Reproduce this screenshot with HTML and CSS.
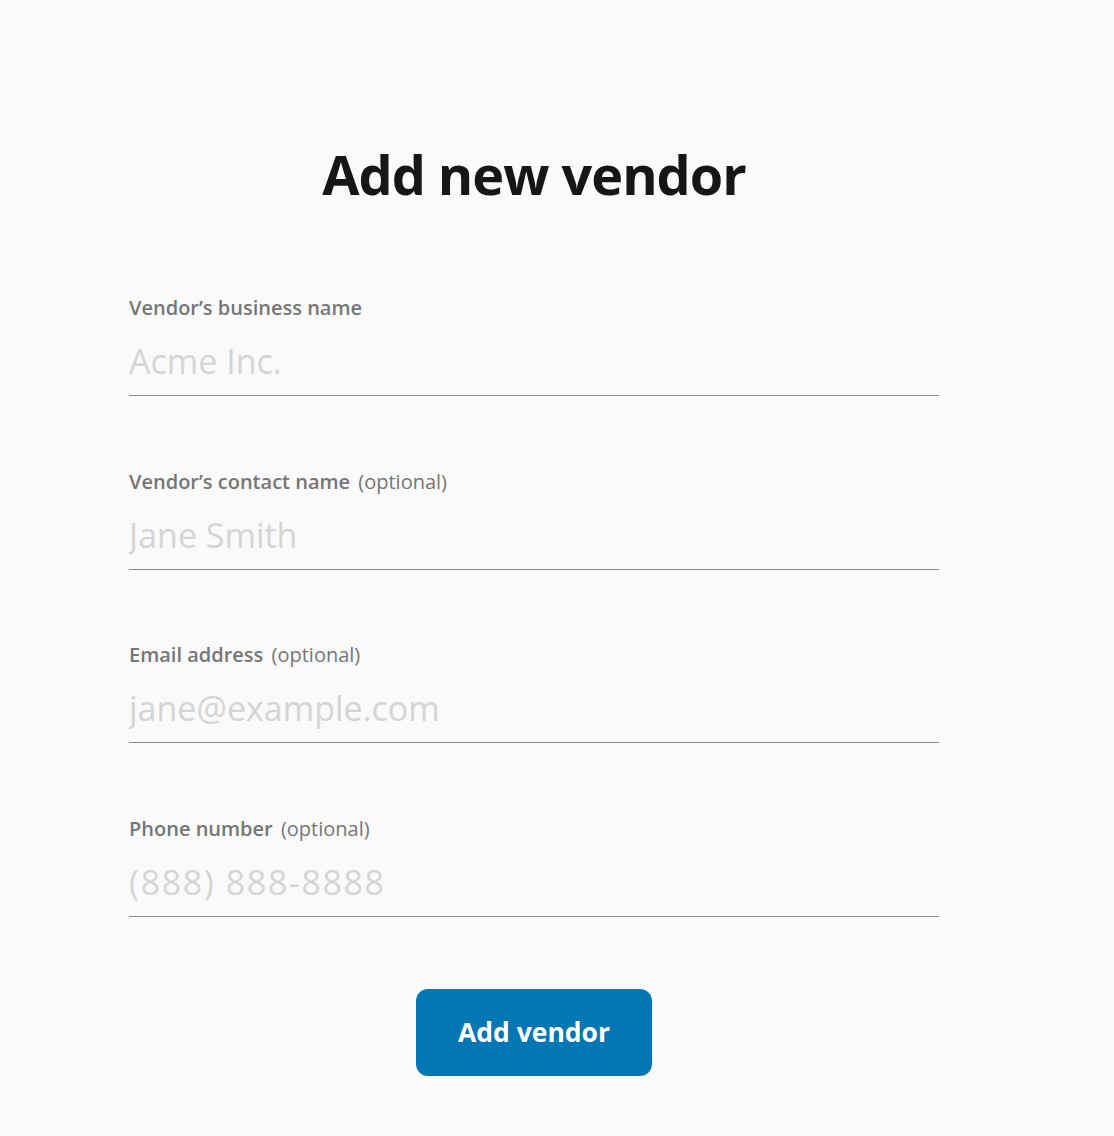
FILE: index.html
```html
<!DOCTYPE html>
<html lang="en">
<head>
<meta charset="utf-8">
<title>Add new vendor</title>
<link rel="stylesheet" href="styles.css">
</head>
<body>
<main class="page">
  <h1 class="title">Add new vendor</h1>
  <form class="form">
    <label class="field">
      <span class="label"><span class="label-main">Vendor’s business name</span></span>
      <input class="input" type="text" placeholder="Acme Inc.">
    </label>
    <label class="field">
      <span class="label"><span class="label-main">Vendor’s contact name</span> <span class="label-opt">(optional)</span></span>
      <input class="input" type="text" placeholder="Jane Smith">
    </label>
    <label class="field">
      <span class="label"><span class="label-main">Email address</span> <span class="label-opt">(optional)</span></span>
      <input class="input" type="email" placeholder="jane@example.com">
    </label>
    <label class="field">
      <span class="label"><span class="label-main">Phone number</span> <span class="label-opt">(optional)</span></span>
      <input class="input input-phone" type="tel" placeholder="(888) 888-8888">
    </label>
    <div class="actions">
      <button class="button" type="button">Add vendor</button>
    </div>
  </form>
</main>
</body>
</html>
```
FILE: styles.css
```css
html, body {
  margin: 0;
  padding: 0;
  background: #fafafa;
}
body {
  font-family: "Open Sans", "Noto Sans", sans-serif;
  color: #1a1a1a;
}
.page {
  width: 810px;
  margin-left: 129px;
  padding-top: 134px;
  display: flex;
  flex-direction: column;
}
.title {
  margin: 0;
  text-align: center;
  font-size: 54px;
  font-weight: 700;
  line-height: 80px;
  color: #161616;
  letter-spacing: -1px;
}
.form {
  margin-top: 80px;
  display: flex;
  flex-direction: column;
}
.field {
  display: flex;
  flex-direction: column;
  margin-bottom: 71.7px;
}
.label {
  font-size: 20px;
  line-height: 28px;
  height: 28px;
  color: #767676;
}
.label-main {
  font-weight: 600;
}
.label-opt {
  font-weight: 400;
  margin-left: 3px;
}
.input {
  box-sizing: border-box;
  margin: 11px 0 0 0;
  height: 63px;
  border: none;
  border-bottom: 1px solid #8a8a8a;
  border-radius: 0;
  background: transparent;
  padding: 0 0 6px 0;
  font-family: inherit;
  font-size: 34px;
  color: #333;
  outline: none;
}
.input::placeholder {
  color: #d5d5d5;
  opacity: 1;
}
.input-phone {
  letter-spacing: 1.6px;
}
.actions {
  display: flex;
  justify-content: center;
  margin-top: 0;
}
.button {
  width: 236px;
  height: 87px;
  border: none;
  border-radius: 12px;
  background: #0476b3;
  color: #fff;
  font-family: inherit;
  font-size: 26.5px;
  font-weight: 700;
  cursor: pointer;
}
```
